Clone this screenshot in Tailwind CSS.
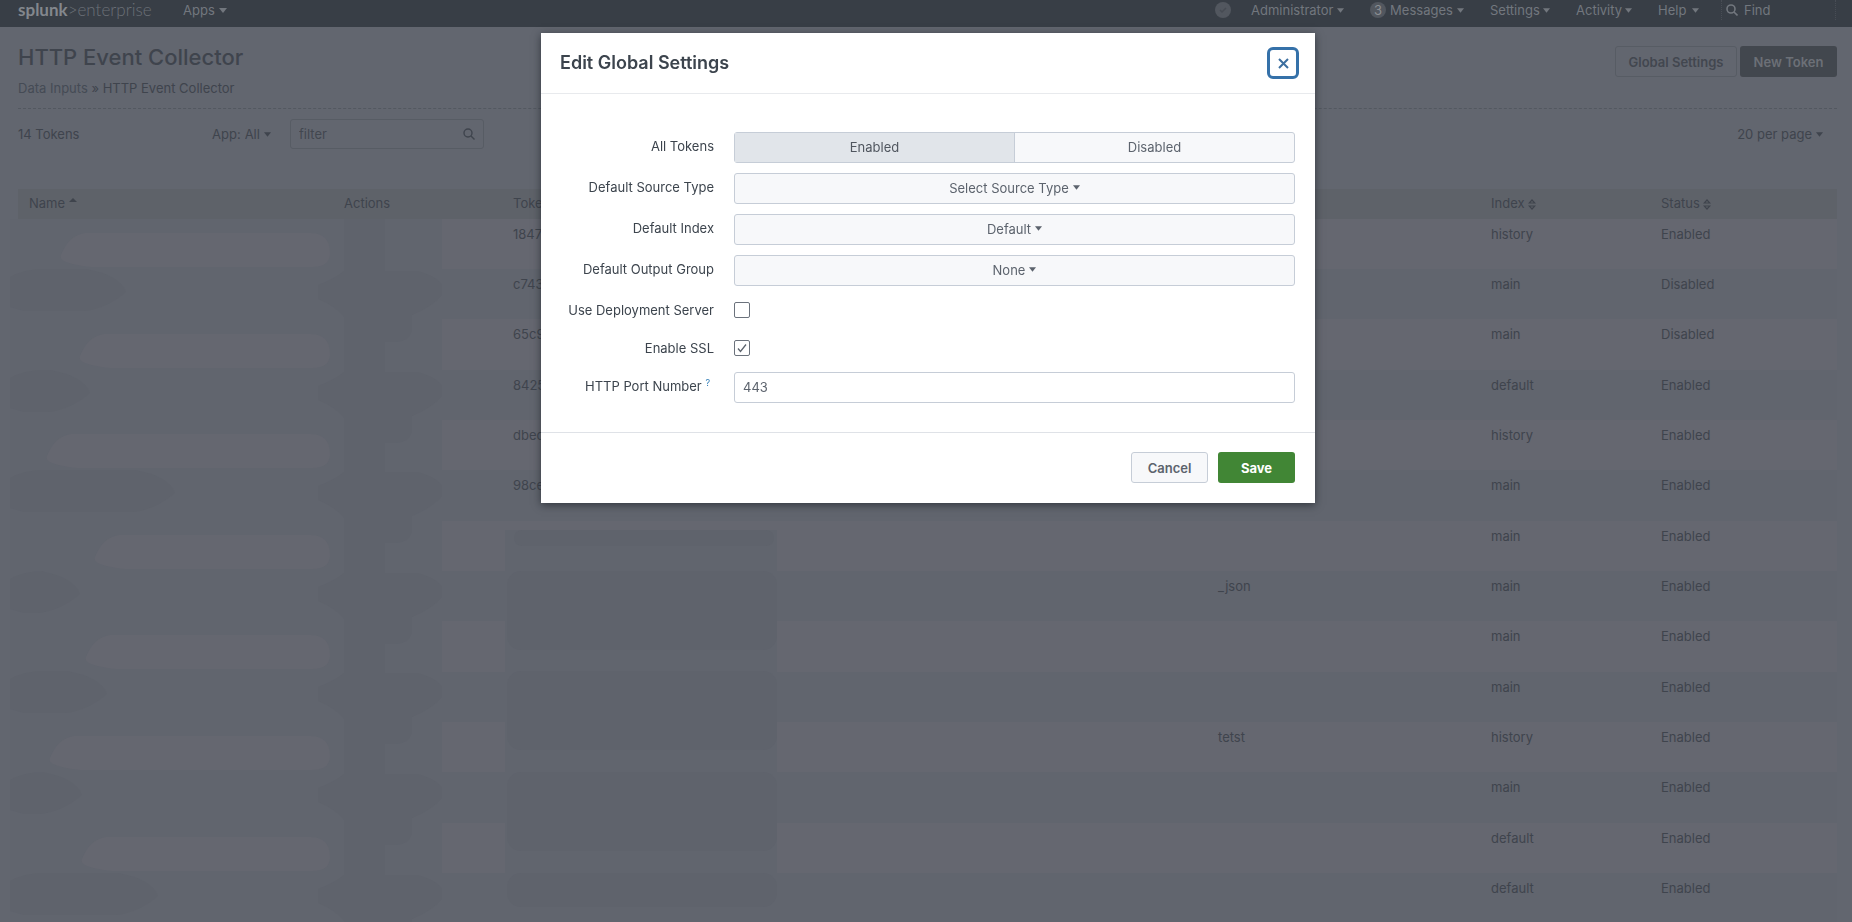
<!DOCTYPE html>
<html lang="en">
<head>
    <meta charset="UTF-8">
    <meta name="viewport" content="width=device-width, initial-scale=1.0">
    <title>HTTP Event Collector | Splunk</title>
    <script src="https://cdn.jsdelivr.net/npm/@tailwindcss/browser@4"></script>
</head>
<body class="h-screen overflow-hidden bg-[#62666f] font-['Inter',sans-serif] text-[13px] leading-5 text-[#3f444d]">
    <!-- Top bar -->
    <nav class="flex h-[27px] items-start bg-[#383e46] pl-[18px] pr-4 text-[#72777e]">
        <a href="#" class="w-[165px] font-['Lato',sans-serif] text-[17px] text-[#6b7077]"><b class="font-bold text-[#83878d]">splunk</b><span class="font-light">&gt;enterprise</span></a>
        <button class="flex items-center gap-1">Apps <svg class="h-[5px] w-2" viewBox="0 0 8 5" fill="currentColor"><path d="M0 0h8L4 5z"/></svg></button>
        <div class="ml-auto flex">
            <span class="mr-5 mt-0.5 flex size-4 items-center justify-center rounded-full bg-[#52575f]">
                <svg class="size-2" viewBox="0 0 8 8" fill="none" stroke="#464b53" stroke-width="1.5"><path d="M1 4l2 2 4-4"/></svg>
            </span>
            <button class="mr-[26px] flex w-[93px] items-center justify-between">Administrator <svg class="h-[5px] w-[7px]" viewBox="0 0 8 5" fill="currentColor"><path d="M0 0h8L4 5z"/></svg></button>
            <button class="mr-[26px] flex w-[94px] items-center justify-between"><span class="flex size-4 items-center justify-center rounded-full bg-[#52575f] text-[#8b8e93]">3</span>Messages <svg class="h-[5px] w-[7px]" viewBox="0 0 8 5" fill="currentColor"><path d="M0 0h8L4 5z"/></svg></button>
            <button class="mr-[26px] flex w-[60px] items-center justify-between">Settings <svg class="h-[5px] w-[7px]" viewBox="0 0 8 5" fill="currentColor"><path d="M0 0h8L4 5z"/></svg></button>
            <button class="mr-[26px] flex w-[56px] items-center justify-between">Activity <svg class="h-[5px] w-[7px]" viewBox="0 0 8 5" fill="currentColor"><path d="M0 0h8L4 5z"/></svg></button>
            <button class="mr-[22px] flex w-[41px] items-center justify-between">Help <svg class="h-[5px] w-[7px]" viewBox="0 0 8 5" fill="currentColor"><path d="M0 0h8L4 5z"/></svg></button>
            <label class="flex w-[115px] items-center gap-1.5 border-x border-dotted border-[#484d55] pl-1">
                <svg class="size-3" viewBox="0 0 12 12" fill="none" stroke="currentColor" stroke-width="1.6"><circle cx="5" cy="5" r="4"/><path d="M8 8l3.5 3.5"/></svg>
                <input type="text" placeholder="Find" aria-label="Find" class="w-20 bg-transparent outline-none placeholder:text-[#72777e]">
            </label>
        </div>
    </nav>

    <!-- Page heading -->
    <header class="ml-[18px] mr-[15px] flex items-start justify-between border-b border-dashed border-[#535860] pb-[10px] pt-4">
        <div>
            <h1 class="text-[22px] font-medium leading-7">HTTP Event Collector</h1>
            <p class="mt-[7px]"><a href="#" class="text-[#454b55]">Data Inputs</a> » HTTP Event Collector</p>
        </div>
        <div class="mt-[3px] flex gap-[3px] font-semibold">
            <button class="h-[31px] w-[122px] rounded-[3px] border border-[#575c64] text-[#42474f]">Global Settings</button>
            <button class="h-[31px] w-[97px] rounded-[3px] bg-[#42474e] text-[#6c7077]">New Token</button>
        </div>
    </header>

    <!-- Filters -->
    <div class="ml-[18px] mr-[15px] mt-[10px] flex h-[30px] items-center">
        <span class="w-[194px]">14 Tokens</span>
        <label class="flex w-[78px] items-center gap-1">App:
            <select class="appearance-none bg-transparent [field-sizing:content] outline-none"><option>All</option></select>
            <svg class="h-[5px] w-[7px]" viewBox="0 0 8 5" fill="currentColor"><path d="M0 0h8L4 5z"/></svg>
        </label>
        <div class="flex h-[30px] w-[194px] items-center rounded-[3px] border border-[#575c64] px-2">
            <input type="text" placeholder="filter" aria-label="filter" class="min-w-0 flex-1 bg-transparent outline-none placeholder:text-[#42474f]">
            <svg class="size-3" viewBox="0 0 12 12" fill="none" stroke="currentColor" stroke-width="1.4"><circle cx="5" cy="5" r="4"/><path d="M8 8l3.5 3.5"/></svg>
        </div>
        <div class="ml-auto mr-[14px] flex items-center gap-1">
            <select aria-label="Rows per page" class="appearance-none bg-transparent [field-sizing:content] outline-none"><option>20 per page</option></select>
            <svg class="h-[5px] w-[7px]" viewBox="0 0 8 5" fill="currentColor"><path d="M0 0h8L4 5z"/></svg>
        </div>
    </div>

    <!-- Token table -->
    <div class="relative mt-10 pl-[18px] pr-[15px]">
        <table class="w-full table-fixed text-left">
            <colgroup>
                <col class="w-[315px]"><col class="w-[169px]"><col><col class="w-[273px]"><col class="w-[170px]"><col class="w-[187px]">
            </colgroup>
            <thead>
                <tr class="h-[30px] bg-[#5e6269] *:border-r-2 *:border-[#62666f] *:px-[11px] *:pb-0.5 *:font-normal last:*:border-r-0">
                    <th>Name <svg class="inline h-1 w-2 -translate-y-1" viewBox="0 0 8 4" fill="currentColor"><path d="M0 4h8L4 0z"/></svg></th>
                    <th>Actions</th>
                    <th>Token Value</th>
                    <th></th>
                    <th>Index <svg class="inline h-[11px] w-2" viewBox="0 0 8 11" fill="currentColor"><path d="M0 4.5L4 0l4 4.5zM0 6.5L4 11l4-4.5z"/><path fill="#5e6269" d="M2.5 3.5L4 2l1.5 1.5zM2.5 7.5L4 9l1.5-1.5z"/></svg></th>
                    <th>Status <svg class="inline h-[11px] w-2" viewBox="0 0 8 11" fill="currentColor"><path d="M0 4.5L4 0l4 4.5zM0 6.5L4 11l4-4.5z"/><path fill="#5e6269" d="M2.5 3.5L4 2l1.5 1.5zM2.5 7.5L4 9l1.5-1.5z"/></svg></th>
                </tr>
            </thead>
            <tbody id="token-rows"></tbody>
        </table>
        <!-- Smudges over the private values -->
        <svg id="smudges" class="pointer-events-none absolute left-0 top-[30px] h-[704px] w-[800px]" viewBox="0 0 800 704" aria-hidden="true"></svg>
    </div>

    <!-- Edit dialog -->
    <div class="fixed inset-0 flex items-start justify-center pl-1 pt-[33px]">
        <form role="dialog" aria-labelledby="dialog-title" class="w-[774px] bg-white shadow-[0_2px_8px_rgba(20,25,32,0.6)]">
            <div class="flex h-[61px] items-center justify-between border-b border-[#e8eaed] pl-[19px] pr-4">
                <h2 id="dialog-title" class="text-[18px] font-semibold text-[#3c444d]">Edit Global Settings</h2>
                <button type="button" aria-label="Close" class="flex size-8 items-center justify-center rounded-md border-3 border-[#3571a9] text-[#3c6fa0]">
                    <svg class="size-[11px]" viewBox="0 0 11 11" fill="none" stroke="currentColor" stroke-width="2"><path d="M1 1l9 9M10 1l-9 9"/></svg>
                </button>
            </div>

            <div class="grid grid-cols-[155px_1fr] gap-x-5 gap-y-[10px] pb-[29px] pl-[18px] pr-5 pt-[38px] text-[#3c444d] [&>label]:pt-1 [&>label]:text-right [&>label]:whitespace-nowrap">
                <span id="all-tokens" class="pt-1 text-right">All Tokens</span>
                <div role="group" aria-labelledby="all-tokens" class="flex h-[31px] rounded-[3px] border border-[#c6cdd7] bg-[#f7f8fa] text-[#5c636d]">
                    <button type="button" aria-pressed="true" class="flex-1 border-r border-[#c6cdd7] bg-[#e1e5ea] pb-0.5 text-[#50565f]">Enabled</button>
                    <button type="button" aria-pressed="false" class="flex-1 pb-0.5">Disabled</button>
                </div>

                <label for="source-type">Default Source Type</label>
                <div class="flex h-[31px] items-center justify-center gap-1 rounded-[3px] border border-[#c6cdd7] bg-[#f7f8fa] pb-0.5 text-[#5c636d]">
                    <select id="source-type" class="appearance-none bg-transparent [field-sizing:content] outline-none"><option>Select Source Type</option></select>
                    <svg class="h-[5px] w-[7px]" viewBox="0 0 8 5" fill="currentColor"><path d="M0 0h8L4 5z"/></svg>
                </div>

                <label for="default-index">Default Index</label>
                <div class="flex h-[31px] items-center justify-center gap-1 rounded-[3px] border border-[#c6cdd7] bg-[#f7f8fa] pb-0.5 text-[#5c636d]">
                    <select id="default-index" class="appearance-none bg-transparent [field-sizing:content] outline-none"><option>Default</option></select>
                    <svg class="h-[5px] w-[7px]" viewBox="0 0 8 5" fill="currentColor"><path d="M0 0h8L4 5z"/></svg>
                </div>

                <label for="output-group">Default Output Group</label>
                <div class="flex h-[31px] items-center justify-center gap-1 rounded-[3px] border border-[#c6cdd7] bg-[#f7f8fa] pb-0.5 text-[#5c636d]">
                    <select id="output-group" class="appearance-none bg-transparent [field-sizing:content] outline-none"><option>None</option></select>
                    <svg class="h-[5px] w-[7px]" viewBox="0 0 8 5" fill="currentColor"><path d="M0 0h8L4 5z"/></svg>
                </div>

                <label for="deployment">Use Deployment Server</label>
                <div class="flex h-7 items-center">
                    <input id="deployment" type="checkbox" class="size-4 appearance-none rounded-[2px] border border-[#6b727c]">
                </div>

                <label for="ssl">Enable SSL</label>
                <div class="grid h-7 items-center justify-start">
                    <input id="ssl" type="checkbox" checked class="peer col-start-1 row-start-1 size-4 appearance-none rounded-[2px] border border-[#6b727c]">
                    <svg class="pointer-events-none invisible col-start-1 row-start-1 size-4 peer-checked:visible" viewBox="0 0 16 16" fill="none" stroke="#5c636d" stroke-width="1.3"><path d="M4 8.5l2.5 3L12 4.5"/></svg>
                </div>

                <label for="port">HTTP Port Number <a href="#" class="mr-1 align-super text-[9px] leading-none text-[#2f7cb5]">?</a></label>
                <input id="port" type="text" value="443" class="h-[31px] rounded-[3px] border border-[#c6cdd7] px-2 pb-0.5 text-[#5c636d] outline-none">
            </div>

            <div class="flex justify-end gap-[10px] border-t border-[#dfe2e7] pb-5 pr-5 pt-[19px] font-semibold">
                <button type="button" class="h-[31px] w-[77px] rounded-[3px] border border-[#c6cdd7] bg-[#f7f8fa] text-[#5c636d]">Cancel</button>
                <button type="submit" class="h-[31px] w-[77px] rounded-[3px] bg-[#418635] font-bold text-white">Save</button>
            </div>
        </form>
    </div>

    <script>
        const tokens = [
            { value: "1847", source: "", index: "history", status: "Enabled" },
            { value: "c743", source: "", index: "main", status: "Disabled" },
            { value: "65c9", source: "", index: "main", status: "Disabled" },
            { value: "8425", source: "", index: "default", status: "Enabled" },
            { value: "dbec", source: "", index: "history", status: "Enabled" },
            { value: "98ce", source: "", index: "main", status: "Enabled" },
            { value: "", source: "", index: "main", status: "Enabled" },
            { value: "", source: "_json", index: "main", status: "Enabled" },
            { value: "", source: "", index: "main", status: "Enabled" },
            { value: "", source: "", index: "main", status: "Enabled" },
            { value: "", source: "tetst", index: "history", status: "Enabled" },
            { value: "", source: "", index: "main", status: "Enabled" },
            { value: "", source: "", index: "default", status: "Enabled" },
            { value: "", source: "", index: "default", status: "Enabled" }
        ];

        document.getElementById("token-rows").innerHTML = tokens.map(token => `
            <tr class="h-[50px] align-top odd:bg-[#656770] even:bg-[#61656e] nth-[3n]:h-[51px] *:px-[11px] *:pt-[5px]">
                <td></td>
                <td></td>
                <td>${token.value}</td>
                <td>${token.source}</td>
                <td>${token.index}</td>
                <td>${token.status}</td>
            </tr>`).join("");

        // Right edge of the dark name smudge and left edge of the light one, per pair of rows
        const names = [
            { light: 61, dark: 126 },
            { light: 80, dark: 90 },
            { light: 47, dark: 175 },
            { light: 95, dark: 80 },
            { light: 86, dark: 107 },
            { light: 50, dark: 82 },
            { light: 82, dark: 158 }
        ];
        let shapes = `<rect x="10" y="0" width="432" height="704" fill="#61656e"/>
            <rect x="505" y="311" width="272" height="393" fill="#61656e"/>
            <rect x="344" y="0" width="41" height="704" fill="#5f636c"/>`;
        names.forEach(({ light, dark }, i) => {
            const y = Math.round(i * 100.6);
            shapes += `
                <path fill="#656770" d="M${light + 24} ${y + 14}H310q20 0 20 20q0 14-18 14H${light + 30}Q${light - 4} ${y + 44} ${light} ${y + 36}Q${light + 8} ${y + 16} ${light + 24} ${y + 14}z"/>
                <path fill="#5f636c" d="M10 ${y + 58}Q24 ${y + 50} 44 ${y + 50}H${dark - 40}Q${dark - 6} ${y + 56} ${dark} ${y + 73}Q${dark - 20} ${y + 90} ${dark - 42} ${y + 92}H24L10 ${y + 88}z"/>
                <path fill="#5f636c" d="M344 ${y + 52}H418Q438 ${y + 58} 442 ${y + 66}V${y + 76}Q432 ${y + 88} 412 ${y + 96}V${y + 112}Q408 ${y + 123} 396 ${y + 123}H344V${y + 98}Q334 ${y + 86} 318 ${y + 80}V${y + 66}Q334 ${y + 60} 344 ${y + 52}z"/>`;
            if (i > 2) {
                shapes += `<rect x="507" y="${y + 50}" width="270" height="${i === 6 ? 34 : 79}" rx="14" fill="#5f636c"/>`;
            }
        });
        shapes += `<rect x="514" y="311" width="260" height="16" rx="8" fill="#5f636c"/>`;
        document.getElementById("smudges").innerHTML = shapes;
    </script>
</body>
</html>
